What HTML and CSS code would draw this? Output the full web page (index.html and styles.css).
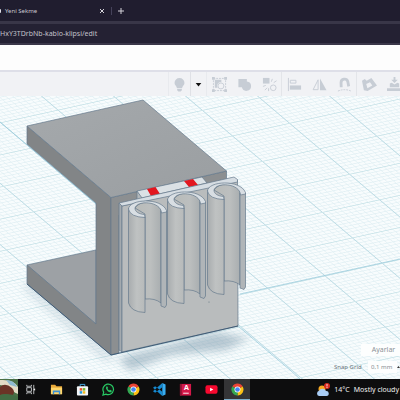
FILE: index.html
```
<!DOCTYPE html>
<html lang="tr">
<head>
<meta charset="utf-8">
<title>Yeni Sekme</title>
<link rel="stylesheet" href="styles.css">
</head>
<body>
<header class="browser">
  <div class="tabs">
    <span class="favicon"></span>
    <span class="tab-title">Yeni Sekme</span>
    <button class="tab-btn close" aria-label="Sekmeyi kapat"><svg viewBox="0 0 8 8"><path d="M2 2l4 4M6 2l-4 4"/></svg></button>
    <button class="tab-btn add" aria-label="Yeni sekme"><svg viewBox="0 0 8 8"><path d="M4 1v6M1 4h6"/></svg></button>
  </div>
  <div class="address"><input class="url" aria-label="Adres" value="HxY3TDrbNb-kablo-klipsi/edit"></div>
</header>
<div class="app-header"></div>
<div class="toolbar">
  <button class="tool bulb" aria-label="Show"><svg viewBox="0 0 16 16"><path d="M8 1a5.3 5.3 0 0 0-5.3 5.3C2.7 8.600 5 9.500 5.300 12h5.400c.3-2.500 2.600-3.400 2.600-5.700A5.300 5.300 0 0 0 8 1zM5.500 12.800h5v1.200l-1.300 1.400H6.800L5.500 14z"/></svg></button>
  <button class="tool caret" aria-label="Options"><svg viewBox="0 0 16 16"><path d="M5 6.500h6L8 10z"/></svg></button>
  <button class="tool" aria-label="Group selection"><svg viewBox="0 0 16 16"><path class="line dash" d="M1.500 1.500h13v13h-13z"/><path d="M3 3h7v2.500a4 4 0 0 0-4 6H3z"/><circle class="line" cx="9.500" cy="9.500" r="3.200"/><path d="M0 0h3v3H0zM13 0h3v3h-3zM0 13h3v3H0zM13 13h3v3h-3z"/></svg></button>
  <button class="tool" aria-label="Group"><svg viewBox="0 0 16 16"><path d="M1.500 2h9v2.800a5 5 0 1 1-5.300 6.200H1.500z"/></svg></button>
  <button class="tool sep" aria-label="Ungroup"><svg viewBox="0 0 16 16"><path d="M1 1h7v6H1z"/><circle class="line" cx="12" cy="11.500" r="3"/><path class="line" d="M10 5l1-3M12.500 6l3-2M1 10l3-1M3 14l2.500-2.500M7 15v-3"/></svg></button>
  <button class="tool" aria-label="Align"><svg viewBox="0 0 16 16"><path class="line" d="M1.500 1v14"/><path class="line" d="M3.500 3.500h6v3h-6z"/><path d="M3 9h12v4.500H3z"/></svg></button>
  <button class="tool" aria-label="Mirror"><svg viewBox="0 0 16 16"><path class="line" d="M6.500 3v10.500H1.200z"/><path d="M8.500 1.500L15.500 14h-7z"/></svg></button>
  <button class="tool sep" aria-label="Cruise"><svg viewBox="0 0 16 16"><path class="magnet" d="M4.500 11L4.300 6a3.700 3.700 0 0 1 7.200-1.200L12.500 10"/><path class="line dash" d="M1 15q7-3 14 0"/></svg></button>
  <button class="tool" aria-label="Workplane"><svg viewBox="0 0 16 16"><path fill-rule="evenodd" d="M0 4l3-2 2 2 5-3 6 8-10 6-4-1zM4.500 7.500l1.300 4.500L11 9 8.500 5.500z"/></svg></button>
  <button class="tool" aria-label="Drop"><svg viewBox="0 0 16 16"><path d="M7 0h2v3h2.500L8 6.500 4.500 3H7zM3 7l2-1 3 2 3-2 2 1v4H3zM0 12h16v3H0z"/></svg></button>
</div>
<main class="stage">
  <svg class="scene" viewBox="0 96 400 283" preserveAspectRatio="xMinYMin slice" role="img" aria-label="Kablo klipsi">
    <defs>
      <pattern id="minor" width="1" height="1" patternUnits="userSpaceOnUse" patternTransform="matrix(5.720 -1.260 3 2.550 210 301)">
        <path d="M0 0h.13v1H0z" fill="#e1f0f4"/><path d="M0 0h1v.22H0z" fill="#e1f0f4"/>
      </pattern>
      <pattern id="major" width="10" height="10" patternUnits="userSpaceOnUse" patternTransform="matrix(5.720 -1.260 3 2.550 210 301)">
        <path d="M0 0h.15v10H0z" fill="#b9dae3"/><path d="M0 0h10v.22H0z" fill="#cce5ea"/>
      </pattern>
      <linearGradient id="outer"><stop offset="0" stop-color="#a8acae"/><stop offset=".5" stop-color="#bfc2c2"/><stop offset="1" stop-color="#b7baba"/></linearGradient>
      <linearGradient id="inner"><stop offset="0" stop-color="#b8bbb9"/><stop offset=".6" stop-color="#bcbfbf"/><stop offset="1" stop-color="#a9aeb0"/></linearGradient>
      <linearGradient id="top" x1="0" y1="0" x2="1" y2="1"><stop offset="0" stop-color="#a5a9ac"/><stop offset="1" stop-color="#9a9ea1"/></linearGradient>
      <filter id="soft" x="-30%" y="-50%" width="160%" height="200%"><feGaussianBlur stdDeviation="4"/></filter>
      <g id="clip">
        <path fill="url(#inner)" d="M135 208Q139 202 148 202Q161 203 161 211V303Q155 298 145 299V214z"/>
        <path fill="url(#outer)" d="M128.500 208V303Q131 312 145 312.500V217Q133 217 128.500 208z"/>
        <path fill="#b0b5b8" d="M161 211L166.500 211V305L165 307.500L161 306z"/>
        <path class="rim" d="M145 217.500Q130 217 128.500 209C129 199 161 197 166.500 210.500V212L161.500 213C161 201 137 200 135 208C135 212 139 214 144.500 214.500z"/>
      </g>
    </defs>
    <rect x="0" y="96" width="400" height="283" fill="#f8fcfd"/>
    <rect x="0" y="96" width="400" height="283" fill="url(#minor)"/>
    <rect x="0" y="96" width="400" height="283" fill="url(#major)"/>
    <path d="M0 122L27 145 96 204M238 326L290 370 300 379M240 294L400 259" fill="none" stroke="#9accdc" stroke-width=".8"/>
    <path d="M118 358L215 332 250 338 226 350 170 355 130 371z" fill="#7895a8" opacity=".5" filter="url(#soft)"/>
    <path d="M27 281L111 355 116 361 104 360 24 289z" fill="#7895a8" opacity=".25" filter="url(#soft)"/>
    <g class="solid">
      <path fill="#9da1a5" d="M27 265L96 250V324z"/>
      <path fill="#828587" d="M27 126L111 197.500V355L27 284V265L96 324V203L27 144z"/>
      <path fill="#8c8f91" d="M111 197.500L226.500 171V190L119 215V353L111 355z"/>
      <path fill="url(#top)" d="M27 126L143 100 226.500 171 111 197.500z"/>
      <path fill="#b3b8bb" d="M137 191L142 197V200L137 201z"/>
      <path fill="#dbe1e5" d="M137 191L202 177 207 183 142 198z"/>
      <path fill="#e2161f" stroke="none" d="M147 189L155.500 187 160 194 151 196zM184 181L193 179 198 185 189 187z"/>
      <path fill="#a3a9ae" d="M119 203L122 206V352L119 350z"/>
      <path fill="#b9bcbd" d="M122 206L237.500 180 238 326 122 352z"/>
      <path fill="#d6dde3" d="M119 203L234 177 237.500 179.500V182L122 206z"/>
      <use href="#clip"/>
      <use href="#clip" x="39" y="-9"/>
      <use href="#clip" x="79" y="-18"/>
    </g>
    <path d="M27 284L111 355 238 326" fill="none" stroke="#3f5b76"/>
    <circle cx="209" cy="302" r=".6" fill="#667785"/>
  </svg>
  <div class="settings">
    <button class="settings-btn">Ayarlar</button>
    <div class="snap"><label for="snap">Snap Grid</label><select id="snap"><option>0,1 mm</option></select><svg class="up" viewBox="0 0 6 6"><path d="M0 5l3-4 3 4z"/></svg></div>
  </div>
</main>
<footer class="taskbar">
  <svg class="landscape" viewBox="0 0 18 21"><rect width="18" height="21" fill="#4b7046"/><path d="M0 1Q14 0 18 8V15Q12 13 10 8L0 6z" fill="#e3dcc5"/><path d="M6 1Q14 1 17 8L10 6z" fill="#8ebbd0"/><path d="M0 8Q5 3 12 9Q16 13 12 17Q6 14 0 16z" fill="#6b3326"/><path d="M0 16Q9 13 18 18V21H0z" fill="#426c43"/></svg>
  <nav class="apps">
    <button class="app" aria-label="Görev görünümü"><svg viewBox="0 0 14 14"><path d="M3 2v1.500h5V2M3 12v-1.500h5V12M3 5h5v4H3zM10.500 2v4M10.500 8v4" fill="none" stroke="#c3c5c7"/><path d="M10 6h2v2h-2z" fill="#eee"/></svg></button>
    <button class="app" aria-label="Dosya Gezgini"><svg viewBox="0 0 14 14"><path d="M1 2h4.500L7 3.500h6V12H1z" fill="#e9a93a"/><path d="M1 5h12v7H1z" fill="#ffd66b"/><path d="M3 8h8v4H9.500v-2h-5v2H3z" fill="#3a91d6"/></svg></button>
    <button class="app" aria-label="Microsoft Store"><svg viewBox="0 0 14 14"><path d="M4.500 4V1.500h5V4" fill="none" stroke="#48aeeb"/><rect x="1" y="3.500" width="12" height="10" rx="1" fill="#f3f6f8"/><path d="M4 5.500h2.700v2.700H4z" fill="#ed5030"/><path d="M7.300 5.500H10v2.700H7.300z" fill="#74b72d"/><path d="M4 8.800h2.700v2.700H4z" fill="#229bdf"/><path d="M7.300 8.800H10v2.700H7.300z" fill="#f5b91d"/></svg></button>
    <button class="app" aria-label="WhatsApp"><svg viewBox="0 0 14 14"><path d="M1 13l.8-3.200A5.700 5.700 0 1 1 4.200 12z" fill="#101a14" stroke="#28c864" stroke-width="1.300"/><path d="M4.500 4l1-.5 1 2-.6.8q.7 1.300 2 1.900l.7-.8 2 1-.3 1Q8.500 11 6 8.500T4.500 4z" fill="#28c864"/></svg></button>
    <button class="app" aria-label="Google Chrome"><svg viewBox="0 0 14 14"><path d="M7 7L1.400 3.700A6.500 6.500 0 0 1 12.600 3.800z" fill="#ea4335"/><path d="M7 7L12.600 3.800A6.500 6.500 0 0 1 7 13.500z" fill="#fbc116"/><path d="M7 7v6.500A6.500 6.500 0 0 1 1.400 3.700z" fill="#34a853"/><circle cx="7" cy="7" r="3.200" fill="#fff"/><circle cx="7" cy="7" r="2.500" fill="#4285f4"/></svg></button>
    <button class="app" aria-label="Visual Studio Code"><svg viewBox="0 0 14 14"><path d="M10 0l3.500 1.500v11L10 14z" fill="#38adf2"/><path d="M10 0v4.500L2.300 10.500 0 9zM10 14V9.500L2.300 3.500 0 5z" fill="#168ad2"/></svg></button>
    <button class="app" aria-label="AutoCAD"><svg viewBox="0 0 14 14"><rect x="1" y="1" width="12" height="12.500" fill="#d41849"/><path d="M1 1h2v12.500H1z" fill="#8e1234"/><text x="8" y="8" class="cad">A</text><path d="M4.500 11h6" stroke="#fff"/></svg></button>
    <button class="app" aria-label="YouTube"><svg viewBox="0 0 14 14"><rect x=".5" y="2.500" width="13" height="9" rx="2" fill="#f8092f"/><path d="M5.500 5v4L9 7z" fill="#fff"/></svg></button>
    <button class="app active" aria-label="Google Chrome"><svg viewBox="0 0 14 14"><path d="M7 7L1.400 3.700A6.500 6.500 0 0 1 12.600 3.800z" fill="#ea4335"/><path d="M7 7L12.600 3.800A6.500 6.500 0 0 1 7 13.500z" fill="#fbc116"/><path d="M7 7v6.500A6.500 6.500 0 0 1 1.400 3.700z" fill="#34a853"/><circle cx="7" cy="7" r="3.200" fill="#fff"/><circle cx="7" cy="7" r="2.500" fill="#4285f4"/></svg></button>
  </nav>
  <div class="weather">
    <svg viewBox="0 0 14 14"><circle cx="6" cy="6" r="3.500" fill="#f7a823"/><path d="M3 13a2.700 2.700 0 0 1 0-5.200A4 4 0 0 1 10 8a2.500 2.500 0 0 1 .5 5z" fill="#a9cdf5"/><circle cx="11" cy="3" r="3" fill="#d92a20"/><path d="M11 1v2.500M11 4v1" stroke="#fff" stroke-width=".8"/></svg>
    <span>14°C</span><span>Mostly cloudy</span>
  </div>
</footer>
</body>
</html>
```
FILE: styles.css
```
* { box-sizing: border-box; }
body {
  margin: 0;
  height: 100vh;
  display: flex;
  flex-direction: column;
  overflow: hidden;
  font: 7px/10px "Noto Sans", "Open Sans", sans-serif;
}
button, input, select { font: inherit; border: 0; padding: 0; background: none; }
svg { display: block; }
.browser { background: #24212f; color: #c8c7cf; }
.tabs { display: flex; align-items: center; height: 21px; background: #201d2f; }
.favicon { width: 1px; height: 4px; background: #dedde5; border-radius: 0 2px 2px 0; margin-right: 4px; }
.tab-title { width: 93px; font-size: 6px; }
.tab-btn { width: 8px; height: 8px; }
.tab-btn svg { width: 8px; height: 8px; fill: none; stroke: #d4d3da; }
.add { width: 17px; border-left: 1px solid #45425a; margin-left: 5px; padding-left: 5px; }
.address { border-top: 3px solid #393648; border-bottom: 2px solid #3a3749; height: 24px; background: #242133; display: flex; align-items: center; }
.url { width: 100%; color: #c1c0c9; font-size: 7px; }
.app-header { height: 27px; background: #fdfdfd; border-bottom: 2px solid #dedfe8; }
.toolbar { display: flex; height: 24px; padding-left: 42%; background: #f1f2f5; overflow: hidden; }
.tool { flex: 0 0 25px; display: grid; place-items: center; }
.tool svg { width: 15px; height: 15px; fill: #c7cdd5; }
.tool .line, .tool .magnet { fill: none; stroke: #c7cdd5; stroke-width: 1; }
.tool .magnet { stroke-width: 3; }
.tool .dash { stroke-dasharray: 2 1; }
.bulb { flex-basis: 22px; border-left: 1px solid #e8eaee; }
.caret { flex-basis: 16px; border-left: 1px solid #dfe1e6; border-right: 1px solid #e8eaee; }
.caret svg { fill: #111; }
.sep { border-right: 1px solid #e3e5e9; }
.stage { flex: 1; min-height: 0; position: relative; overflow: hidden; }
.scene { width: 100%; height: 100%; }
.solid { stroke: #667a8d; stroke-width: 0.7; stroke-linejoin: round; }
.rim { fill: #d8dee3; }
.settings { position: absolute; right: 0; bottom: 6px; color: #858a90; }
.settings-btn { display: block; width: 39px; height: 12px; margin: 0 0 5px auto; padding-left: 6px; color: #8c9196; background: #fdfefe; }
.snap { display: flex; align-items: center; }
.snap label { width: 34px; color: #6d747b; font-size: 6px; }
.snap select { width: 29px; height: 12px; padding-left: 3px; appearance: none; background: #fdfefe; color: #858a90; font-size: 6px; }
.up { width: 3px; height: 4px; fill: #333; }
.taskbar { display: flex; height: 21px; background: #0d0d0e; color: #f1f1f1; }
.landscape { width: 18px; height: 21px; }
.apps { width: 58%; display: grid; grid-template-columns: repeat(9, 1fr); }
.app { display: grid; place-items: center; }
.app svg { width: 13px; height: 13px; }
.active { background: #343436; border-bottom: 1px solid #7daecb; }
.cad { font: bold 8px "Liberation Sans", sans-serif; fill: #fff; text-anchor: middle; }
.weather { margin-left: auto; display: flex; align-items: center; gap: 4px; padding-right: 1px; white-space: nowrap; }
.weather svg { width: 14px; height: 14px; }
```
